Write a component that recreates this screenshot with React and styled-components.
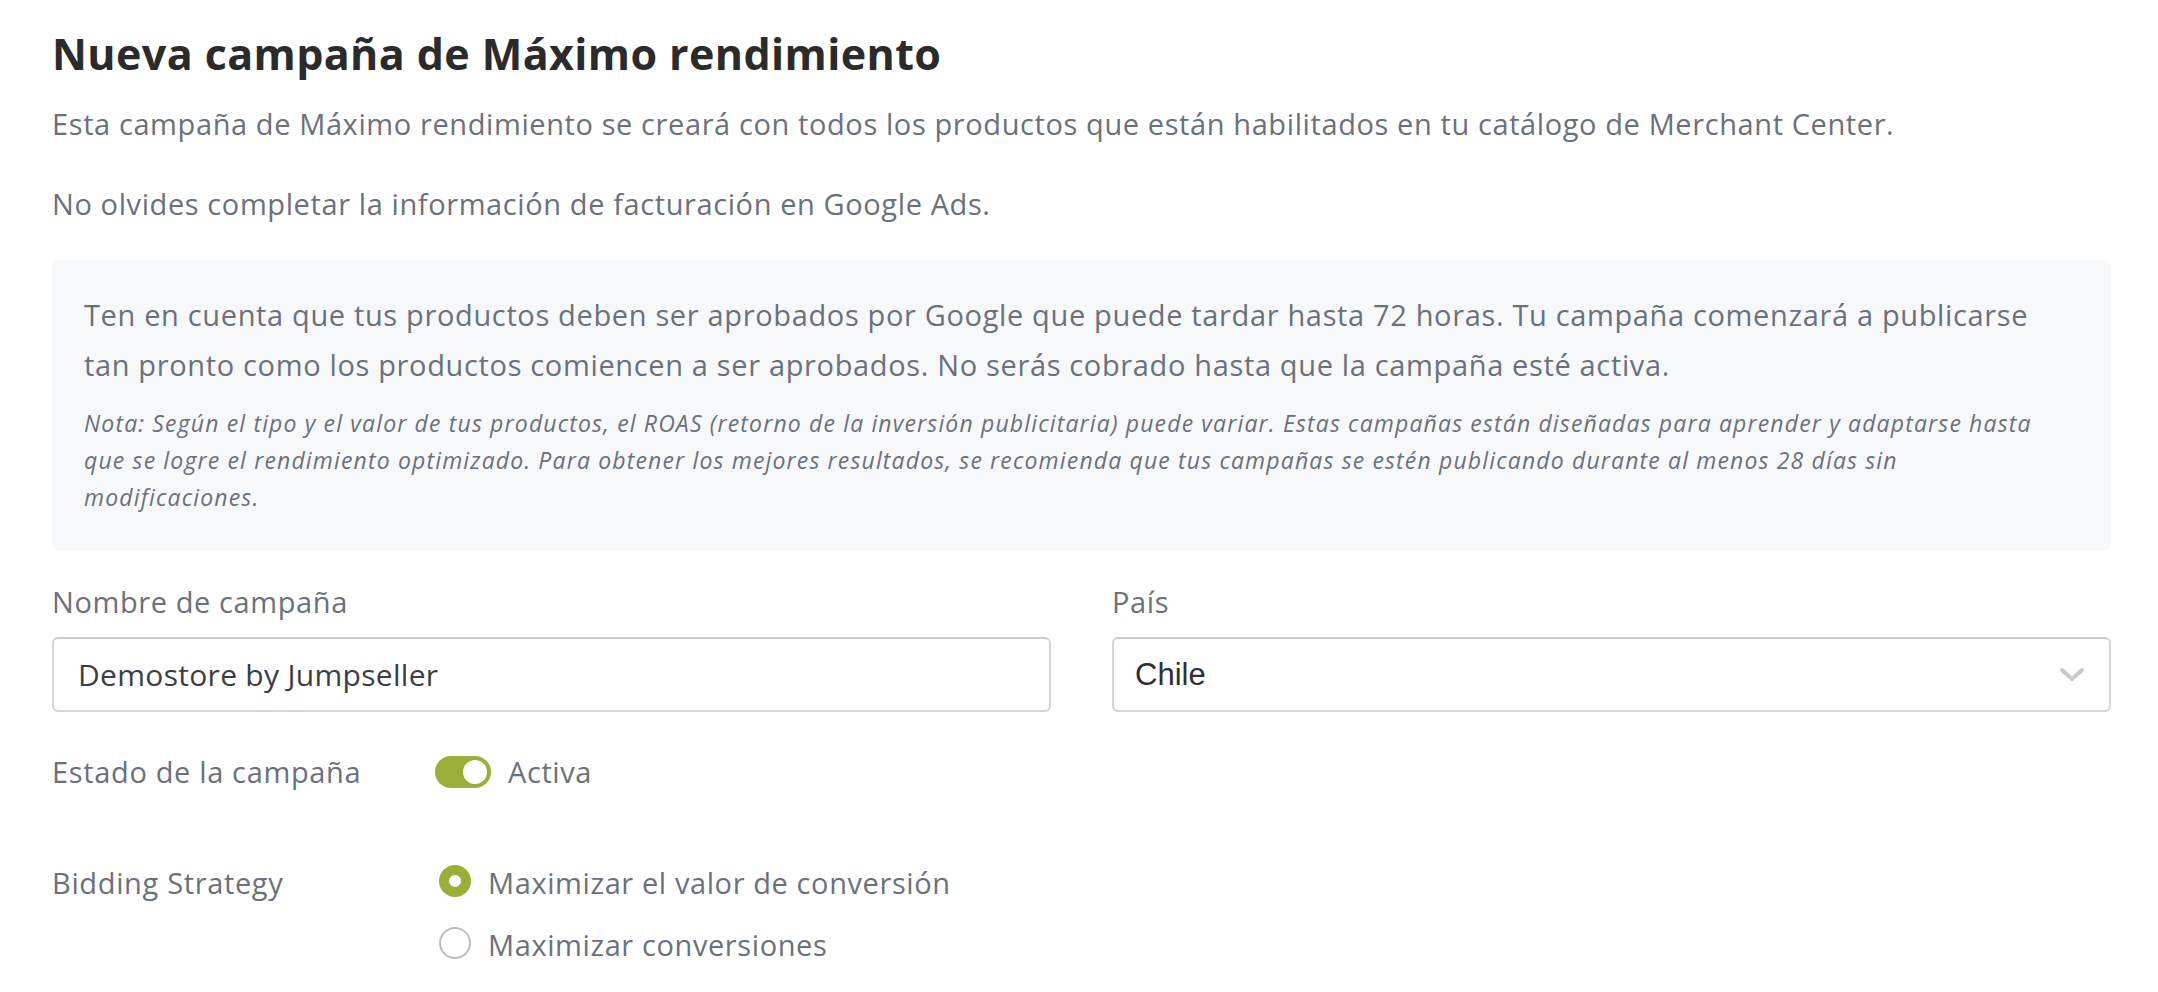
import React from "react";
import styled, { createGlobalStyle } from "styled-components";

const GlobalStyle = createGlobalStyle`
  html, body { margin: 0; padding: 0; background: #ffffff; }
  body { font-family: "Open Sans", Lato, sans-serif; -webkit-font-smoothing: antialiased; }
  * { box-sizing: border-box; }
`;

const Page = styled.div`
  padding: 28px 47px 40px 52px;
  width: 2158px;
`;

const Title = styled.h1`
  margin: 0;
  font-size: 43px;
  line-height: 52px;
  font-weight: 700;
  color: #2b2b2c;
  letter-spacing: 0.4px;
`;

const Lead = styled.p`
  margin: ${(p) => p.$top}px 0 0;
  font-size: 29px;
  line-height: 40px;
  color: #6b717a;
  letter-spacing: 0.6px;
`;

const Notice = styled.div`
  margin-top: 36px;
  background: #f7f8fa;
  border-radius: 6px;
  padding: 30px 32px 34px;
`;

const NoticeText = styled.p`
  margin: 0;
  font-size: 29px;
  line-height: 50px;
  color: #6b717a;
  letter-spacing: 0.65px;
  white-space: nowrap;
`;

const NoteText = styled.p`
  margin: 15px 0 0;
  font-size: 23px;
  line-height: 37px;
  font-style: italic;
  color: #6b717a;
  letter-spacing: 1.15px;
  white-space: nowrap;
`;

const FieldsGrid = styled.div`
  margin-top: 32px;
  display: grid;
  grid-template-columns: 1fr 1fr;
  column-gap: 61px;
`;

const Field = styled.div`
  display: flex;
  flex-direction: column;
  gap: 15px;
`;

const Label = styled.label`
  font-size: 29px;
  line-height: 40px;
  color: #6b717a;
  letter-spacing: 0.6px;
`;

const Box = styled.div`
  position: relative;
  height: 75px;
  border: 2px solid #d2d5d9;
  border-top-color: #c9ccd0;
  border-radius: 6px;
  background: #fff;
  display: flex;
  align-items: center;
  padding-left: ${(p) => p.$pad}px;
`;

const InputValue = styled.span`
  font-size: 30px;
  color: #3b3e43;
  letter-spacing: 0.3px;
`;

const SelectValue = styled.span`
  font-family: "Liberation Sans", Arial, sans-serif;
  font-size: 31px;
  color: #2f2f30;
`;

const Chevron = styled.svg`
  position: absolute;
  right: 24px;
  top: 50%;
  transform: translateY(-50%);
`;

const SettingRow = styled.div`
  margin-top: ${(p) => p.$top}px;
  display: grid;
  grid-template-columns: 383px 1fr;
  align-items: ${(p) => (p.$start ? "start" : "center")};
`;

const SettingLabel = styled.span`
  font-size: 29px;
  line-height: 40px;
  color: #6b717a;
  letter-spacing: 0.65px;
`;

const Inline = styled.div`
  display: flex;
  align-items: center;
  gap: 17px;
  height: 40px;
`;

const Toggle = styled.span`
  position: relative;
  width: 56px;
  height: 32px;
  border-radius: 16px;
  background: #9bae37;
  flex: none;
  &::after {
    content: "";
    position: absolute;
    right: 4px;
    top: 4px;
    width: 24px;
    height: 24px;
    border-radius: 50%;
    background: #fff;
  }
`;

const OptionText = styled.span`
  font-size: 29px;
  line-height: 40px;
  color: #6b717a;
  letter-spacing: 0.6px;
`;

const RadioGroup = styled.div`
  display: flex;
  flex-direction: column;
  gap: 22px;
  padding-left: 4px;
`;

const Radio = styled.span`
  width: 32px;
  height: 32px;
  margin-bottom: 5px;
  border-radius: 50%;
  flex: none;
  background: #fff;
  border: ${(p) => (p.$checked ? "10px solid #9bae37" : "2px solid #babec4")};
`;

export default function App() {
  return (
    <Page>
      <GlobalStyle />
      <Title>Nueva campaña de Máximo rendimiento</Title>
      <Lead $top={24}>
        Esta campaña de Máximo rendimiento se creará con todos los productos que están habilitados en tu catálogo de Merchant Center.
      </Lead>
      <Lead $top={40}>No olvides completar la información de facturación en Google Ads.</Lead>

      <Notice>
        <NoticeText>
          Ten en cuenta que tus productos deben ser aprobados por Google que puede tardar hasta 72 horas. Tu campaña comenzará a publicarse
          <br />
          tan pronto como los productos comiencen a ser aprobados. No serás cobrado hasta que la campaña esté activa.
        </NoticeText>
        <NoteText>
          Nota: Según el tipo y el valor de tus productos, el ROAS (retorno de la inversión publicitaria) puede variar. Estas campañas están diseñadas para aprender y adaptarse hasta
          <br />
          que se logre el rendimiento optimizado. Para obtener los mejores resultados, se recomienda que tus campañas se estén publicando durante al menos 28 días sin
          <br />
          modificaciones.
        </NoteText>
      </Notice>

      <FieldsGrid>
        <Field>
          <Label>Nombre de campaña</Label>
          <Box $pad={24}>
            <InputValue>Demostore by Jumpseller</InputValue>
          </Box>
        </Field>
        <Field>
          <Label>País</Label>
          <Box $pad={21}>
            <SelectValue>Chile</SelectValue>
            <Chevron width="26" height="16" viewBox="0 0 26 16">
              <path d="M3 3 L13 12 L23 3" fill="none" stroke="#c9c9c9" strokeWidth="4" strokeLinecap="round" strokeLinejoin="round" />
            </Chevron>
          </Box>
        </Field>
      </FieldsGrid>

      <SettingRow $top={40}>
        <SettingLabel>Estado de la campaña</SettingLabel>
        <Inline>
          <Toggle />
          <OptionText>Activa</OptionText>
        </Inline>
      </SettingRow>

      <SettingRow $top={71} $start>
        <SettingLabel>Bidding Strategy</SettingLabel>
        <RadioGroup>
          <Inline>
            <Radio $checked />
            <OptionText>Maximizar el valor de conversión</OptionText>
          </Inline>
          <Inline>
            <Radio />
            <OptionText>Maximizar conversiones</OptionText>
          </Inline>
        </RadioGroup>
      </SettingRow>
    </Page>
  );
}
